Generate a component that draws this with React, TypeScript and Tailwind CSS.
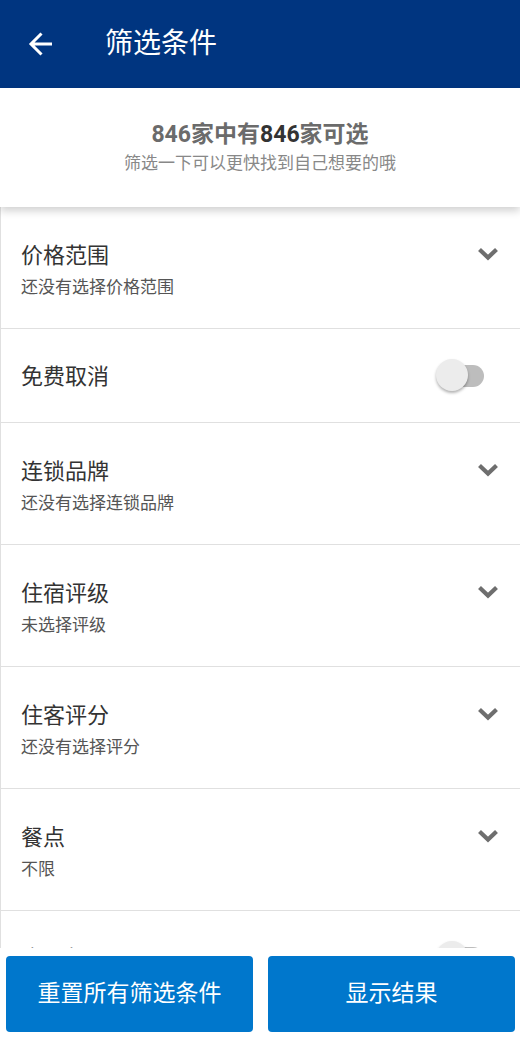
import React from 'react';

type Filter =
  | { kind: 'select'; title: string; hint: string }
  | { kind: 'toggle'; title: string };

const filters: Filter[] = [
  { kind: 'select', title: '价格范围', hint: '还没有选择价格范围' },
  { kind: 'toggle', title: '免费取消' },
  { kind: 'select', title: '连锁品牌', hint: '还没有选择连锁品牌' },
  { kind: 'select', title: '住宿评级', hint: '未选择评级' },
  { kind: 'select', title: '住客评分', hint: '还没有选择评分' },
  { kind: 'select', title: '餐点', hint: '不限' },
  { kind: 'toggle', title: '含早餐' },
];

function Chevron() {
  return (
    <svg width="24" height="18" viewBox="0 0 24 18" className="shrink-0">
      <polyline points="3.5,4.5 12,12.5 20.5,4.5" fill="none" stroke="#6e6e6e" strokeWidth="4.2" />
    </svg>
  );
}

function Toggle() {
  return (
    <div className="relative w-[50px] h-[36px] shrink-0">
      <div className="absolute left-[7px] right-[2px] top-[7px] h-[22px] rounded-full bg-[#bdbdbd]" />
      <div className="absolute left-0 top-[1px] w-[32px] h-[32px] rounded-full bg-[#ececec] shadow-[0_2px_3px_rgba(0,0,0,0.3)]" />
    </div>
  );
}

function FilterRow({ f }: { f: Filter }) {
  if (f.kind === 'toggle') {
    return (
      <div className="h-[94px] shrink-0 flex items-center justify-between pl-[20px] pr-[34px] border-b border-l border-[#e0e0e0]">
        <span className="text-[22px] leading-[26px] text-[#333] mt-[2px]">{f.title}</span>
        <Toggle />
      </div>
    );
  }
  return (
    <div className="h-[122px] shrink-0 flex justify-between pl-[20px] pr-[20px] pt-[36px] border-b border-l border-[#e0e0e0]">
      <div className="flex flex-col">
        <span className="text-[22px] leading-[26px] text-[#333]">{f.title}</span>
        <span className="mt-[7px] text-[17px] leading-[22px] text-[#555]">{f.hint}</span>
      </div>
      <div className="pt-[2px]">
        <Chevron />
      </div>
    </div>
  );
}

export default function App() {
  return (
    <div
      className="w-[520px] h-[1039px] flex flex-col bg-white overflow-hidden"
      style={{ fontFamily: "Roboto, 'Noto Sans CJK SC', sans-serif" }}
    >
      <header className="h-[88px] shrink-0 bg-[#003580] flex items-center pl-[28px]">
        <svg width="25" height="26" viewBox="0 0 25 26">
          <path d="M24 13H3M13.5 2.5L3 13l10.5 10.5" fill="none" stroke="#fff" strokeWidth="3" />
        </svg>
        <span className="ml-[52px] text-[28px] leading-[34px] text-white">筛选条件</span>
      </header>

      <section className="h-[119px] shrink-0 relative z-10 bg-white flex flex-col items-center justify-center shadow-[0_4px_8px_rgba(0,0,0,0.18)]">
        <div className="text-[23px] leading-[28px] font-bold text-[#6b6b6b]">
          846家中有<span className="text-[#333]">846</span>家可选
        </div>
        <div className="text-[17px] leading-[22px] text-[#888] mt-[3px]">筛选一下可以更快找到自己想要的哦</div>
      </section>

      <div className="flex-1 flex flex-col overflow-hidden">
        {filters.map((f) => (
          <FilterRow key={f.title} f={f} />
        ))}
      </div>

      <footer className="h-[91px] shrink-0 bg-white grid grid-cols-2 gap-[15px] pl-[6px] pr-[5px] pt-[8px] pb-[7px]">
        <button className="rounded-[4px] bg-[#0077cc] text-white text-[23px]">重置所有筛选条件</button>
        <button className="rounded-[4px] bg-[#0077cc] text-white text-[23px]">显示结果</button>
      </footer>
    </div>
  );
}
